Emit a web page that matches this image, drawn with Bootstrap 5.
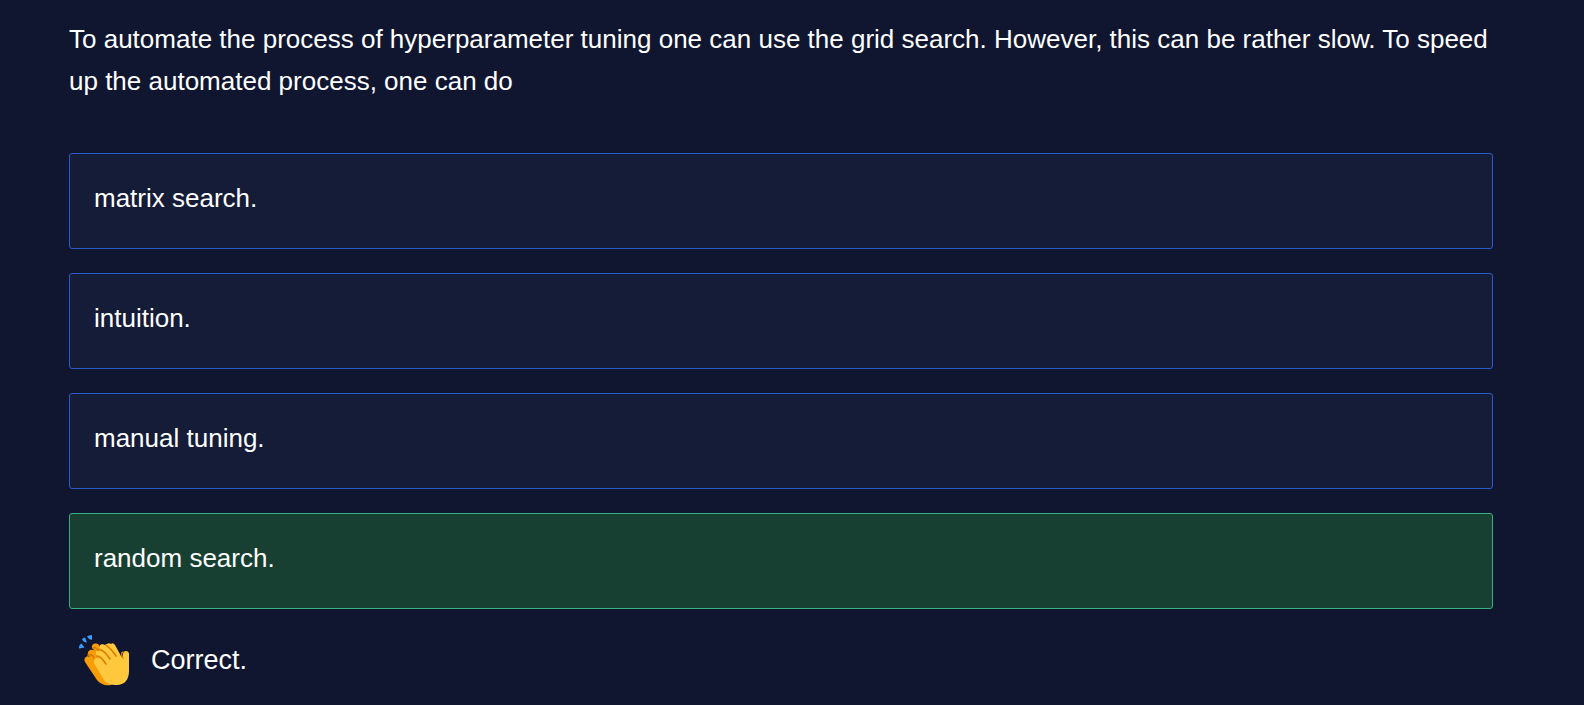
<!DOCTYPE html>
<html lang="en">
<head>
<meta charset="utf-8">
<meta name="viewport" content="width=device-width, initial-scale=1">
<title>Quiz: hyperparameter tuning</title>
<link href="https://cdn.jsdelivr.net/npm/bootstrap@5.3.0/dist/css/bootstrap.min.css" rel="stylesheet">
<style>
  body {
    background: #10162f;
    color: #fff;
    font-family: "Liberation Sans", Arial, sans-serif;
    font-size: 26px;
    line-height: 42px;
  }
  .quiz { padding: 18px 91px 16px 69px; }
  .question { margin-bottom: 51px; }
  .answers { gap: 24px; }
  .answer {
    --bs-btn-color: #fff;
    --bs-btn-bg: #151c38;
    --bs-btn-border-color: #2a5bc7;
    --bs-btn-hover-color: #fff;
    --bs-btn-hover-bg: #1b2547;
    --bs-btn-hover-border-color: #3b6fe0;
    --bs-btn-font-size: 26px;
    --bs-btn-line-height: 42px;
    --bs-btn-border-radius: 3px;
    --bs-btn-font-family: inherit;
    padding: 23px 24px 29px;
  }
  .answer-correct {
    --bs-btn-bg: #174033;
    --bs-btn-border-color: #37ae80;
    --bs-btn-hover-bg: #1c4c3d;
    --bs-btn-hover-border-color: #37ae80;
  }
  .feedback { padding: 24px 8px 0; gap: 20px; font-size: 27px; }
</style>
</head>
<body>
<main class="quiz">
  <p class="question" id="question">To automate the process of hyperparameter tuning one can use the grid search. However, this can be rather slow. To speed up the automated process, one can do</p>
  <div class="answers d-grid" role="group" aria-labelledby="question">
    <button type="button" class="btn answer text-start">matrix search.</button>
    <button type="button" class="btn answer text-start">intuition.</button>
    <button type="button" class="btn answer text-start">manual tuning.</button>
    <button type="button" class="btn answer answer-correct text-start" aria-pressed="true">random search.</button>
  </div>
  <div class="feedback d-flex align-items-center" role="status">
    <svg width="54" height="54" viewBox="0 0 54 54" aria-hidden="true">
      <g fill="#3e9bfc">
        <path d="M4.500 10.500L7.500 14.500L2 15.500Q1.500 12.500 4.500 10.500Z"/>
        <path d="M5 6.500Q6 4.500 8 4.500L10 9.500Q6.500 9.500 5 6.500Z"/>
        <path d="M10 3.500Q11.500 2 15 2V7Q11.500 6.500 10 3.500Z"/>
      </g>
      <path fill="#f99d07" d="M8 29C6 25 10 22 13 24L11 22C10 18 14 15 18 18L15 15C14 11 19 9 22 12L40 44L34 52C28 53 23 51 20 47Z"/>
      <path fill="#ffc83d" d="M27 47L18 32C15 27 19 23 23 26L20 23C17 19 21 15 25 18L23 16C21 12 25 10 28 12Q32 9 34 11Q36 9 38 12L44 23L46 25V21C46 17 52 17 52 21V38C52 47 47 52 40 52C34 52 30 51 27 47Z"/>
      <g fill="none" stroke="#d67d00" stroke-width="1.500" stroke-linecap="round" stroke-linejoin="round">
        <path d="M20 23C24 23 26 27 29 31"/>
        <path d="M21 17C25 16 29 20 33 26"/>
        <path d="M29 12C33 15 36 18 39 23"/>
        <path d="M46 19C43.500 20 45 23 46 25"/>
        <path d="M11 22C14 21 16 22 17 25M16 15C18 14 20 15 21 17"/>
      </g>
    </svg>
    <span>Correct.</span>
  </div>
</main>
<script src="https://cdn.jsdelivr.net/npm/bootstrap@5.3.0/dist/js/bootstrap.bundle.min.js"></script>
</body>
</html>
